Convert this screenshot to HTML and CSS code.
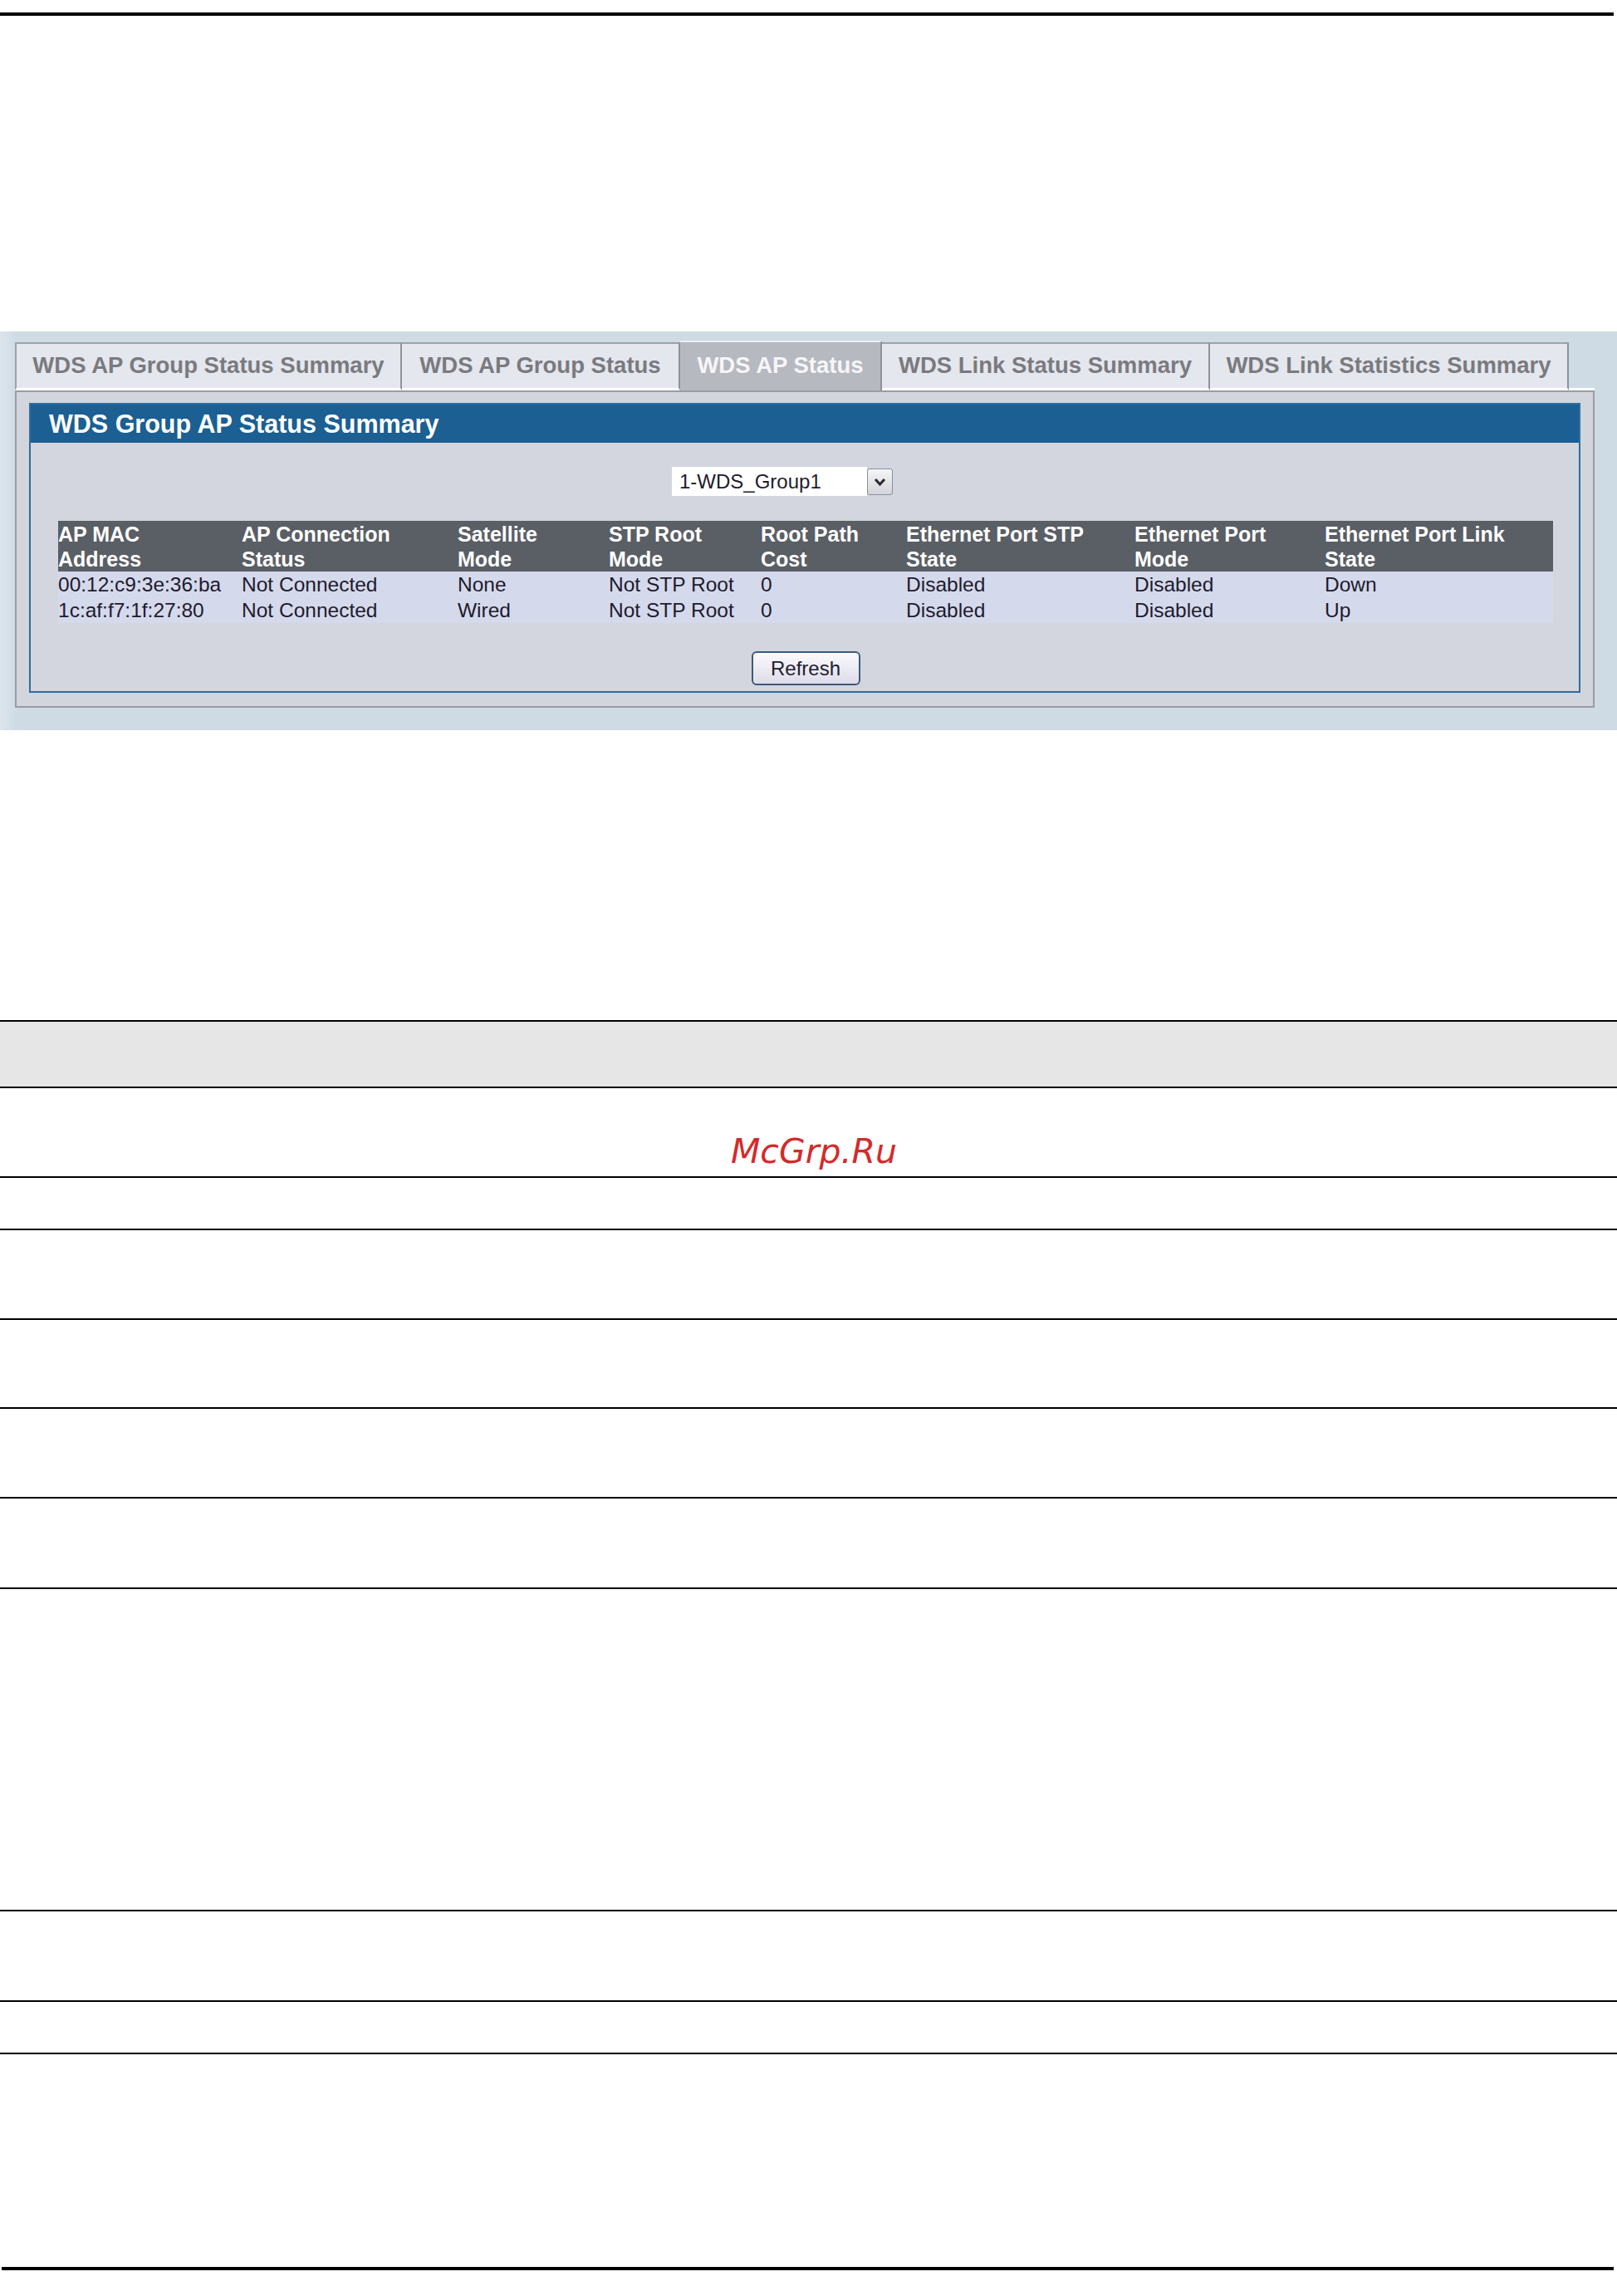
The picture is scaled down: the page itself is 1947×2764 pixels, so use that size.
FILE: index.html
```html
<!DOCTYPE html>
<html>
<head>
<meta charset="utf-8">
<title>WDS AP Status</title>
<link rel="stylesheet" href="styles.css">
</head>
<body>
<div class="page">
  <div class="top-rule"></div>

  <div class="ui">
    <div class="tabs">
      <div class="tab t1">WDS AP Group Status Summary</div>
      <div class="tab t2">WDS AP Group Status</div>
      <div class="tab t3 active">WDS AP Status</div>
      <div class="tab t4">WDS Link Status Summary</div>
      <div class="tab t5">WDS Link Statistics Summary</div>
      <div class="tab-fill"></div>
    </div>
    <div class="panel">
      <div class="box">
        <div class="box-title">WDS Group AP Status Summary</div>
        <div class="box-body">
          <div class="sel-row">
            <div class="select">
              <span class="sel-text">1-WDS_Group1</span>
              <span class="sel-btn"><svg width="29" height="30" viewBox="0 0 29 30"><path d="M9 12 L14.5 18 L20 12" fill="none" stroke="#2a2a33" stroke-width="3"/></svg></span>
            </div>
          </div>

          <div class="tr head">
            <div>AP MAC<br>Address</div>
            <div>AP Connection<br>Status</div>
            <div>Satellite<br>Mode</div>
            <div>STP Root<br>Mode</div>
            <div>Root Path<br>Cost</div>
            <div>Ethernet Port STP<br>State</div>
            <div>Ethernet Port<br>Mode</div>
            <div>Ethernet Port Link<br>State</div>
          </div>
          <div class="tr data">
            <div>00:12:c9:3e:36:ba</div>
            <div>Not Connected</div>
            <div>None</div>
            <div>Not STP Root</div>
            <div>0</div>
            <div>Disabled</div>
            <div>Disabled</div>
            <div>Down</div>
          </div>
          <div class="tr data">
            <div>1c:af:f7:1f:27:80</div>
            <div>Not Connected</div>
            <div>Wired</div>
            <div>Not STP Root</div>
            <div>0</div>
            <div>Disabled</div>
            <div>Disabled</div>
            <div>Up</div>
          </div>

          <div class="btn-row"><button class="btn" type="button">Refresh</button></div>
        </div>
      </div>
    </div>
  </div>

  <div class="doc">
    <div class="row r-head"></div>
    <div class="row r-mark"><span class="mark">McGrp.Ru</span></div>
    <div class="row r-short"></div>
    <div class="row r-std"></div>
    <div class="row r-std2"></div>
    <div class="row r-std"></div>
    <div class="row r-std3"></div>
    <div class="row r-tall"></div>
    <div class="row r-std3"></div>
    <div class="row r-short"></div>
  </div>

  <div class="bottom-rule"></div>
</div>
</body>
</html>
```

FILE: styles.css
```css
* { box-sizing: border-box; }

html, body {
  margin: 0;
  padding: 0;
  background: #ffffff;
}

body {
  font-family: "Liberation Sans", Arial, sans-serif;
  color: #000;
}

.page {
  width: 1947px;
  height: 2764px;
  overflow: hidden;
}

.top-rule {
  margin-top: 15px;
  width: 1943px;
  height: 4px;
  background: #000;
}

/* ---------- UI screenshot ---------- */
.ui {
  margin-top: 380px;
  height: 480px;
  padding: 11px 27px 0 18px;
  background: linear-gradient(90deg, #dde5ec 0, #cedbe5 20px, #cedbe5 100%);
}

.tabs {
  display: flex;
  align-items: flex-end;
  height: 60px;
}

.tab {
  flex: none;
  height: 58px;
  display: flex;
  align-items: center;
  justify-content: center;
  background: #e4e7ee;
  border-top: 2px solid #9ea1a8;
  border-right: 2px solid #8f9298;
  border-bottom: 3px solid #ffffff;
  font-family: "Liberation Sans", Arial, sans-serif;
  font-weight: bold;
  font-size: 27.5px;
  color: #7a7a7e;
  white-space: nowrap;
  padding-bottom: 1px;
}

.t1 { width: 466px; border-left: 2px solid #9ea1a8; }
.t2 { width: 335px; }
.t3 { width: 243px; }
.t4 { width: 395px; }
.t5 { width: 432px; }

.tab.active {
  height: 60px;
  background: #b6b9c0;
  border-top: 2px solid #eceef2;
  border-bottom: 0;
  color: #f6f6f8;
  padding-bottom: 3px;
}

.tab-fill {
  flex: 1;
  height: 3px;
  background: #ffffff;
}

.panel {
  width: 1902px;
  height: 382px;
  background: #d2d5dc;
  border: 2px solid #9a9da4;
  padding: 13px 15px 16px 15px;
}

.box {
  height: 349px;
  border: 2px solid #2f6d9f;
  background: #d3d6de;
  display: flex;
  flex-direction: column;
}

.box-title {
  height: 46px;
  background: #1b5f93;
  color: #ffffff;
  font-family: "Liberation Sans", Arial, sans-serif;
  font-weight: bold;
  font-size: 30.5px;
  line-height: 46px;
  padding-left: 22px;
  white-space: nowrap;
}

.box-body {
  flex: 1;
  padding: 29px 0 0 33px;
}

.sel-row {
  height: 35px;
  padding-left: 739px;
}

.select {
  display: flex;
  align-items: center;
  width: 266px;
  height: 35px;
}

.sel-text {
  width: 235px;
  height: 35px;
  background: #ffffff;
  font-size: 24px;
  line-height: 36px;
  padding-left: 9px;
  color: #1e1b2c;
}

.sel-btn {
  width: 31px;
  height: 32px;
  border: 1px solid #8790a0;
  border-radius: 3px;
  background: linear-gradient(#f6f6f8, #d3d4da);
  display: flex;
}

.tr {
  width: 1800px;
  display: grid;
  grid-template-columns: 221px 260px 182px 183px 175px 275px 229px 275px;
}

.tr > div {
  white-space: nowrap;
}

.head {
  margin-top: 30px;
  height: 61px;
  background: #5a5e65;
  color: #ffffff;
  font-weight: bold;
  font-size: 25px;
  line-height: 30px;
  padding-top: 1px;
}

.data {
  height: 31px;
  background: #d5d9ec;
  color: #1e1b2c;
  font-size: 24.5px;
  line-height: 31px;
}

.btn-row {
  margin-top: 34px;
  width: 1800px;
  display: flex;
  justify-content: center;
}

.btn {
  width: 131px;
  height: 41px;
  border: 2px solid #3e5a7c;
  border-radius: 6px;
  background: linear-gradient(#fbfbfd, #dddce9);
  font-family: "Liberation Sans", Arial, sans-serif;
  font-size: 24px;
  color: #23202e;
  padding: 0;
}

/* ---------- document part ---------- */
.doc {
  margin-top: 349px;
  width: 1947px;
  border-top: 2px solid #000;
}

.row {
  box-sizing: content-box;
  border-bottom: 2px solid #000;
}

.r-head { height: 78px; background: #e6e6e6; }
.r-mark { height: 48px; padding-top: 58px; padding-left: 880px; }
.r-short { height: 61px; }
.r-std { height: 106px; }
.r-std2 { height: 105px; }
.r-std3 { height: 107px; }
.r-tall { height: 386px; }

.mark {
  font-family: "DejaVu Sans", Verdana, sans-serif;
  font-style: italic;
  font-size: 41px;
  line-height: 36px;
  color: #d42a2a;
  white-space: nowrap;
}

.bottom-rule {
  margin-top: 256px;
  margin-left: 2px;
  width: 1941px;
  height: 4px;
  background: #000;
}
```
